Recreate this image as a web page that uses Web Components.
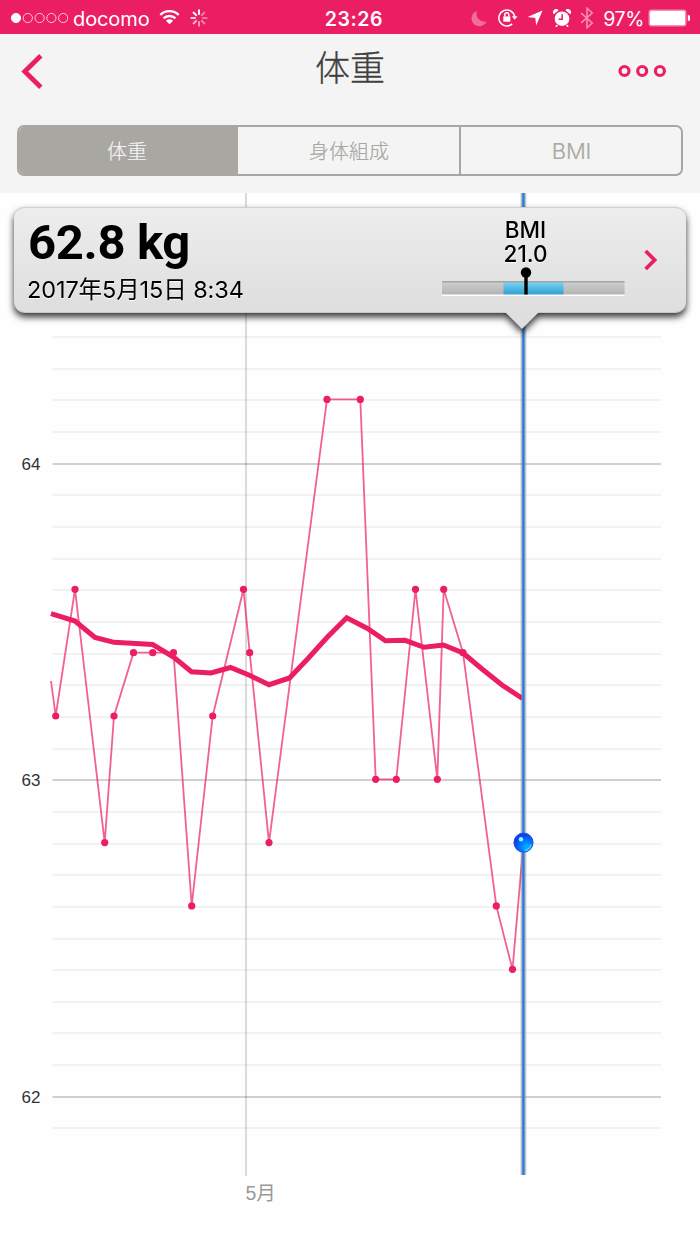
<!DOCTYPE html>
<html lang="ja">
<head>
<meta charset="utf-8">
<meta name="viewport" content="width=device-width">
<title>体重</title>
<style>
  body {
    margin: 0;
    background: #fefefe;
    font-family: Inter, "Noto Sans CJK JP", sans-serif;
    --accent: #ec1e63;
    --gray: #a8a7a2;
  }
</style>
</head>
<body>
<app-screen>
  <status-bar slot="status" carrier="docomo" time="23:26" battery="97"></status-bar>
  <nav-header slot="header">体重</nav-header>
  <segment-control slot="header">
    <segment-item selected>体重</segment-item>
    <segment-item>身体組成</segment-item>
    <segment-item>BMI</segment-item>
  </segment-control>
  <weight-chart>
    <value-callout>
      <span slot="value">62.8 kg</span>
      <span slot="date">2017年5月15日 8:34</span>
      <bmi-gauge slot="gauge" value="21.0"></bmi-gauge>
    </value-callout>
  </weight-chart>
</app-screen>

<script>
class BaseElement extends HTMLElement {
  constructor() {
    super();
    this.attachShadow({ mode: 'open' });
  }

  connectedCallback() {
    this.shadowRoot.innerHTML = this.render();
  }
}

class AppScreen extends BaseElement {
  render() {
    return `
      <style>
        :host {
          display: flex;
          flex-direction: column;
          height: 1244px;
          overflow: hidden;
        }
        header {
          display: flex;
          flex-direction: column;
          height: 159px;
          background: #f4f4f4;
        }
      </style>
      <slot name="status"></slot>
      <header><slot name="header"></slot></header>
      <slot></slot>
    `;
  }
}

class StatusBar extends BaseElement {
  render() {
    const spokes = [1, 0.4, 0.4, 0.45, 0.55, 0.65, 0.8, 0.95].map((o, i) =>
      `<path d="M9 .6v5.2" transform="rotate(${i * 45} 9 9)" opacity="${o}"/>`).join('');

    return `
      <style>
        :host {
          display: grid;
          grid-template-columns: 1fr auto 1fr;
          align-items: center;
          height: 34px;
          box-sizing: border-box;
          padding: 0 10px;
          background: var(--accent);
          color: white;
          font-size: 20px;
          line-height: 34px;
        }
        div {
          display: flex;
          align-items: center;
        }
        svg { display: block; flex: none; }
        .carrier { margin: 1px 9px 0 5px; letter-spacing: -0.1px; }
        .time { font-weight: 600; font-size: 19.5px; letter-spacing: 0.6px; padding: 1px 0 0 8px; }
        .right { justify-content: flex-end; }
        .percent { margin: 2px 4px 0 9px; font-size: 19.5px; letter-spacing: -0.4px; }
      </style>
      <div>
        <svg width="58" height="12" viewBox="0 0 58 12" style="margin-top:-1px" fill="none" stroke="#fff" stroke-width="1">
          <circle cx="6" cy="6" r="4.6" fill="#fff"/>
          <g opacity=".75">
            <circle cx="17.8" cy="6" r="4.6"/>
            <circle cx="29.6" cy="6" r="4.6"/>
            <circle cx="41.4" cy="6" r="4.6"/>
            <circle cx="53.2" cy="6" r="4.6"/>
          </g>
        </svg>
        <span class="carrier">${this.getAttribute('carrier')}</span>
        <svg width="21" height="16" viewBox="0 0 22 17" style="margin-top:-2px" fill="none" stroke="#fff" stroke-width="2.5">
          <path d="M1.2 6.2a14 14 0 0 1 19.6 0"/>
          <path d="M4.7 10a9 9 0 0 1 12.6 0"/>
          <path d="M11 16.3l-3.8-3.8a5.4 5.4 0 0 1 7.6 0z" fill="#fff" stroke="none"/>
        </svg>
        <svg width="18" height="18" viewBox="0 0 18 18" style="margin:-1px 0 0 10px" stroke="#fff" stroke-width="2">${spokes}</svg>
      </div>
      <div class="time">${this.getAttribute('time')}</div>
      <div class="right">
        <svg width="16" height="17" viewBox="0 0 16 17" fill="#fff" opacity=".35">
          <path d="M6 1A7.8 7.8 0 1 0 15.5 11.5 8 8 0 0 1 6 1z"/>
        </svg>
        <svg width="20" height="19" viewBox="0 0 20 19" style="margin:-1px 0 0 11px" fill="none" stroke="#fff" stroke-width="1.5">
          <path d="M14.2 15.9A8 8 0 1 1 16.7 8.5"/>
          <path d="M13.9 8.2h5.6l-2.8 3.5z" fill="#fff" stroke="none"/>
          <path d="M5.3 8.4h7v5.3h-7z" fill="#fff" stroke="none"/>
          <path d="M6.8 8.5V6.7a2 2 0 0 1 4 0v1.8"/>
        </svg>
        <svg width="16" height="16" viewBox="0 0 16 16" style="margin-left:9px" fill="#fff">
          <path d="M15.5.5L9.2 15.5 8.3 8.1.5 7z"/>
        </svg>
        <svg width="18" height="18" viewBox="0 0 18 18" style="margin:-1px 0 0 10px" fill="#fff">
          <circle cx="9" cy="9.7" r="7.3"/>
          <path d="M4.5 16l-1.7 1.7M13.5 16l1.7 1.7" stroke="#fff" stroke-width="1.5"/>
          <path d="M.8 5.2A3 3 0 0 1 5.6 1.2zM17.2 5.2A3 3 0 0 0 12.4 1.2z"/>
          <path d="M9.2 5.3v4.9H5.6" fill="none" stroke="#ec1e63" stroke-width="1.5"/>
        </svg>
        <svg width="14" height="22" viewBox="0 0 14 22" style="margin-left:9px" fill="none" stroke="#fff" stroke-width="1.6" opacity=".5">
          <path d="M1.2 6.2l11 9.8L7 20.8V1.2L12.2 6l-11 9.8"/>
        </svg>
        <span class="percent">${this.getAttribute('battery')}%</span>
        <svg width="42" height="18" viewBox="0 0 42 18">
          <rect x=".5" y=".5" width="38" height="17" rx="3" fill="#fff" opacity=".5"/>
          <rect x="2" y="2" width="35" height="14" rx="1.5" fill="#fff"/>
          <path d="M39.8 6v6a3 3 0 0 0 0-6z" fill="#fff"/>
        </svg>
      </div>
    `;
  }
}

class NavHeader extends BaseElement {
  render() {
    return `
      <style>
        :host {
          display: grid;
          grid-template-columns: 1fr auto 1fr;
          align-items: center;
          height: 72px;
          padding: 0 21px;
          color: #404040;
        }
        h1 {
          margin: -3px 0 0;
          font-size: 35px;
          font-weight: 300;
          line-height: 69px;
          -webkit-text-stroke: 0.3px #404040;
        }
        svg { display: block; }
        .back { margin-top: 3px; }
        .more { justify-self: end; margin: 1px 12px 0 0; }
      </style>
      <svg class="back" width="23" height="36" viewBox="0 0 23 36" fill="none" stroke="var(--accent)" stroke-width="4.8">
        <path d="M19.8 1.8L3.8 17.5l16 15.7"/>
      </svg>
      <h1><slot></slot></h1>
      <svg class="more" width="50" height="14" viewBox="0 0 50 14" fill="none" stroke="var(--accent)" stroke-width="3.2">
        <circle cx="7.5" cy="7" r="4.5"/>
        <circle cx="25.2" cy="7" r="4.5"/>
        <circle cx="42.9" cy="7" r="4.5"/>
      </svg>
    `;
  }
}

class SegmentControl extends BaseElement {
  render() {
    return `
      <style>
        :host {
          display: grid;
          grid-template-columns: 217fr 223fr 222fr;
          height: 51px;
          box-sizing: border-box;
          margin: 19px 17px 0;
          border: 2px solid var(--gray);
          border-radius: 7px;
          overflow: hidden;
        }
      </style>
      <slot></slot>
    `;
  }
}

class SegmentItem extends BaseElement {
  render() {
    return `
      <style>
        :host {
          display: flex;
          align-items: center;
          justify-content: center;
          box-sizing: border-box;
          border-left: 2px solid var(--gray);
          padding-left: 1px;
          color: var(--gray);
          font-size: 20px;
          font-weight: 300;
          -webkit-text-stroke: 0.2px currentColor;
        }
        :host(:first-child) { border-left: 0; padding: 0 1px 0 0; }
        :host(:last-child) { font-size: 22px; letter-spacing: -0.2px; }
        :host([selected]) {
          background: var(--gray);
          color: #f4f4f4;
        }
      </style>
      <slot></slot>
    `;
  }
}

const STEP = 31.66;
const FIRST_DATE_X = 51;

// [x, kg]
const WEIGHTS = [
  [55.7, 63.2], [75, 63.6], [104.7, 62.8], [114, 63.2], [133.5, 63.4],
  [152.7, 63.4], [173.5, 63.4], [191.7, 62.6], [212.7, 63.2], [243.5, 63.6],
  [249.7, 63.4], [269, 62.8], [327, 64.2], [360.3, 64.2], [375.7, 63],
  [396.3, 63], [415.5, 63.6], [437.3, 63], [443.7, 63.6], [463, 63.4],
  [496.3, 62.6], [512.5, 62.4], [523.5, 62.8]
];

const AVERAGE = '51,613.7 75,621 95,637.5 114,642.3 152.7,644.5 173.5,657 191.5,671.7 211,673 230.5,667.5 250,675.5 269,684.7 289.5,678 308,658.5 327,637.5 346.7,617.7 367.5,628.5 385.5,640.7 405,640.3 424,647.3 443.5,645 463,653 482,669 502,685 522.5,698.5';

class WeightChart extends BaseElement {
  y(kg) {
    return 779.3 + (63 - kg) * 10 * STEP;
  }

  renderGrid() {
    let lines = '';
    for (let i = -14; i <= 11; i++) {
      const y = Math.round(780.2 + i * STEP);
      const color = i % 10 === 0 ? '#d0d0d0' : '#f2f2f2';
      lines += `<path d="M52.5 ${y}H661" stroke="${color}"/>`;
    }
    return lines;
  }

  render() {
    const points = WEIGHTS.map(([x, kg]) => [x, this.y(kg).toFixed(1)]);
    const dots = points.slice(0, -1).map(([x, y]) => `<circle cx="${x}" cy="${y}" r="3.6"/>`).join('');
    const [lastX, lastY] = points[points.length - 1];

    return `
      <style>
        :host {
          display: block;
          position: relative;
          flex: 1;
        }
        svg { display: block; }
        .kg { font-family: "Liberation Sans", Arial, sans-serif; }
        .month { font-family: "Liberation Sans", "Noto Sans CJK JP", sans-serif; }
      </style>
      <svg width="700" height="1051" viewBox="0 193 700 1051" fill="none">
        <defs>
          <radialGradient id="ball" cx=".65" cy=".72" r=".6">
            <stop offset="0" stop-color="#00b4ff"/>
            <stop offset=".55" stop-color="#0078ff"/>
            <stop offset="1" stop-color="#0a45ea"/>
          </radialGradient>
        </defs>
        <g stroke-width="2">${this.renderGrid()}</g>
        <path d="M246 193V1176" stroke="#000" stroke-opacity=".14" stroke-width="2"/>
        <g class="kg" font-size="17" fill="#333" text-anchor="end">
          <text x="40.5" y="470">64</text>
          <text x="40.5" y="786">63</text>
          <text x="40.5" y="1103">62</text>
        </g>
        <text class="month" x="245.5" y="1200" font-size="19.5" fill="#999">5月</text>
        <polyline points="${AVERAGE}" stroke="#ec1e63" stroke-width="5"/>
        <polyline points="${FIRST_DATE_X},681 ${points.join(' ')}" stroke="#ec1e63" stroke-opacity=".7" stroke-width="1.8"/>
        <g fill="#ec1e63">${dots}</g>
        <path d="M523.4 193V1175" stroke="#000" stroke-opacity=".13" stroke-width="6.4"/>
        <path d="M523.4 193V1175" stroke="#8a9fb8" stroke-opacity=".7" stroke-width="4.2"/>
        <path d="M523.4 193V1175" stroke="#2a7be0" stroke-width="2.2"/>
        <circle cx="${lastX}" cy="${lastY}" r="9.6" fill="url(#ball)" stroke="#2a4bea" stroke-width="1"/>
        <path d="M531 844.5a7.7 7.7 0 0 1-6.5 6" stroke="#3fdcff" stroke-width="1.6" opacity=".8"/>
        <circle cx="521" cy="839.3" r="2.2" fill="#8ff0ff"/>
      </svg>
      <slot></slot>
    `;
  }
}

class ValueCallout extends BaseElement {
  render() {
    return `
      <style>
        :host {
          position: absolute;
          top: 14px;
          left: 14px;
          right: 14px;
          height: 106px;
          filter: drop-shadow(0 4px 3.5px rgba(0, 0, 0, 0.8));
          color: #000;
        }
        .body {
          display: flex;
          align-items: center;
          height: 106px;
          box-sizing: border-box;
          border-top: 1px solid #d0d0d0;
          border-bottom: 1px solid #c6c8c6;
          border-radius: 11px;
          padding: 2px 28px 0 13px;
          background: linear-gradient(#ededed, #dedede);
          text-shadow: 0 1px 1px #fff;
        }
        .text { flex: 1; }
        .value {
          padding-left: 1px;
          font: 700 49px/52px Roboto, sans-serif;
          letter-spacing: -0.35px;
          white-space: nowrap;
          text-shadow: none;
        }
        .date {
          margin-top: 6px;
          font-size: 23.5px;
          font-weight: 400;
          line-height: 30px;
          letter-spacing: -0.1px;
          white-space: nowrap;
        }
        .arrow {
          position: absolute;
          top: 105px;
          left: 491px;
          width: 34px;
          height: 17px;
          background: #dedede;
          clip-path: polygon(0 0, 100% 0, 50% 100%);
        }
        .chevron { margin: -2px 0 0 20px; }
      </style>
      <div class="body">
        <div class="text">
          <div class="value"><slot name="value"></slot></div>
          <div class="date"><slot name="date"></slot></div>
        </div>
        <slot name="gauge"></slot>
        <svg class="chevron" width="15" height="22" viewBox="0 0 15 22" fill="none" stroke="var(--accent)" stroke-width="3.8">
          <path d="M2.6 2l9 9-9 9"/>
        </svg>
      </div>
      <div class="arrow"></div>
    `;
  }
}

class BmiGauge extends BaseElement {
  render() {
    return `
      <style>
        :host {
          display: flex;
          flex-direction: column;
          align-items: center;
          width: 183px;
          margin: 0 -2px 8px 1px;
          font-size: 22.5px;
          font-weight: 500;
          text-align: center;
        }
        .label {
          margin-right: 16px;
          padding-top: 2px;
          line-height: 24px;
        }
        svg { display: block; }
      </style>
      <div class="label">BMI<br>${this.getAttribute('value')}</div>
      <svg width="183" height="32" viewBox="0 0 183 32">
        <defs>
          <linearGradient id="track" x2="0" y2="1">
            <stop offset="0" stop-color="#cfcfcf"/>
            <stop offset="1" stop-color="#b3b3b3"/>
          </linearGradient>
          <linearGradient id="range" x2="0" y2="1">
            <stop offset="0" stop-color="#79d2f5"/>
            <stop offset="1" stop-color="#2e9fcd"/>
          </linearGradient>
        </defs>
        <rect y="15" width="182.5" height="14" fill="url(#track)"/>
        <rect x="61.5" y="16" width="60" height="13" fill="url(#range)"/>
        <rect y="15" width="182.5" height="1.5" fill="#a3a5a3"/>
        <rect y="28.5" width="182.5" height="1.5" fill="#fff"/>
        <path d="M84 6v22.5" stroke="#000" stroke-width="3.4"/>
        <circle cx="84" cy="6.5" r="5.2"/>
      </svg>
    `;
  }
}

customElements.define('app-screen', AppScreen);
customElements.define('status-bar', StatusBar);
customElements.define('nav-header', NavHeader);
customElements.define('segment-control', SegmentControl);
customElements.define('segment-item', SegmentItem);
customElements.define('weight-chart', WeightChart);
customElements.define('value-callout', ValueCallout);
customElements.define('bmi-gauge', BmiGauge);
</script>
</body>
</html>
